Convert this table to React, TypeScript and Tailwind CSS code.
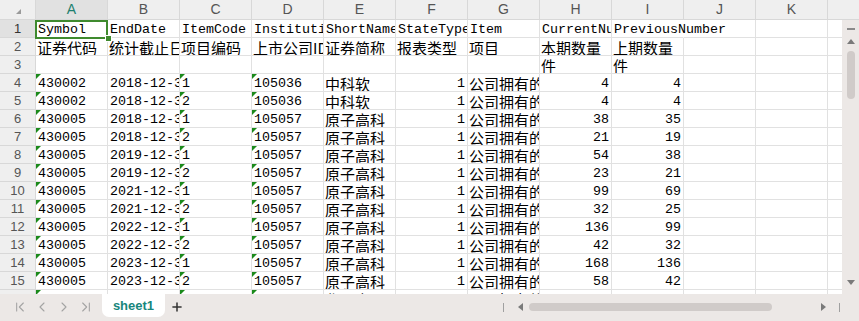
import React from "react";
import { ChevronFirst, ChevronLeft, ChevronRight, ChevronLast, Plus } from "lucide-react";

type CellDef = {
  t?: string;
  right?: boolean;
  cjk?: boolean;
  tri?: boolean;
  overflow?: boolean;
};

const COLS = ["A", "B", "C", "D", "E", "F", "G", "H", "I", "J", "K", "L"];

const data: string[][] = [
  ["430002", "2018-12-31", "1", "105036", "中科软", "1", "公司拥有的专利数量", "4", "4"],
  ["430002", "2018-12-31", "2", "105036", "中科软", "1", "公司拥有的专利数量", "4", "4"],
  ["430005", "2018-12-31", "1", "105057", "原子高科", "1", "公司拥有的专利数量", "38", "35"],
  ["430005", "2018-12-31", "2", "105057", "原子高科", "1", "公司拥有的专利数量", "21", "19"],
  ["430005", "2019-12-31", "1", "105057", "原子高科", "1", "公司拥有的专利数量", "54", "38"],
  ["430005", "2019-12-31", "2", "105057", "原子高科", "1", "公司拥有的专利数量", "23", "21"],
  ["430005", "2021-12-31", "1", "105057", "原子高科", "1", "公司拥有的专利数量", "99", "69"],
  ["430005", "2021-12-31", "2", "105057", "原子高科", "1", "公司拥有的专利数量", "32", "25"],
  ["430005", "2022-12-31", "1", "105057", "原子高科", "1", "公司拥有的专利数量", "136", "99"],
  ["430005", "2022-12-31", "2", "105057", "原子高科", "1", "公司拥有的专利数量", "42", "32"],
  ["430005", "2023-12-31", "1", "105057", "原子高科", "1", "公司拥有的专利数量", "168", "136"],
  ["430005", "2023-12-31", "2", "105057", "原子高科", "1", "公司拥有的专利数量", "58", "42"],
  ["430009", "2018-12-31", "1", "105063", "华环电子", "1", "公司拥有的专利数量", "12", "10"],
];

function toRow(r: string[]): CellDef[] {
  return [
    { t: r[0], tri: true },
    { t: r[1] },
    { t: r[2], tri: true },
    { t: r[3], tri: true },
    { t: r[4], cjk: true },
    { t: r[5], right: true },
    { t: r[6], cjk: true },
    { t: r[7], right: true },
    { t: r[8], right: true },
    {},
    {},
    {},
  ];
}

const rows: CellDef[][] = [
  [
    { t: "Symbol" },
    { t: "EndDate" },
    { t: "ItemCode" },
    { t: "InstitutionID" },
    { t: "ShortName" },
    { t: "StateTypeCode" },
    { t: "Item" },
    { t: "CurrentNumber" },
    { t: "PreviousNumber", overflow: true },
    {},
    {},
    {},
  ],
  [
    { t: "证券代码", cjk: true },
    { t: "统计截止日期", cjk: true },
    { t: "项目编码", cjk: true },
    { t: "上市公司ID", cjk: true },
    { t: "证券简称", cjk: true },
    { t: "报表类型", cjk: true },
    { t: "项目", cjk: true },
    { t: "本期数量", cjk: true },
    { t: "上期数量", cjk: true },
    {},
    {},
    {},
  ],
  [{}, {}, {}, {}, {}, {}, {}, { t: "件", cjk: true }, { t: "件", cjk: true }, {}, {}, {}],
  ...data.map(toRow),
];

function Cell({ c }: { c: CellDef }) {
  const font = c.cjk
    ? "font-['Noto_Sans_CJK_SC',sans-serif] text-[15px] pl-[1px]"
    : "font-['Liberation_Mono',monospace] text-[13.33px] pl-[2px]";
  return (
    <div
      className={`relative shrink-0 w-[72px] h-[18px] border-b border-r border-[#e1e1e1] flex items-center pt-[2px] leading-none whitespace-nowrap text-black ${
        c.overflow ? "overflow-visible border-r-transparent z-10" : "overflow-hidden"
      } ${c.right ? "justify-end pr-[2px]" : ""} ${font}`}
    >
      {c.tri && (
        <span className="absolute top-0 left-0 w-0 h-0 border-t-[5px] border-r-[5px] border-t-[#1b8a1b] border-r-transparent" />
      )}
      {c.t}
    </div>
  );
}

function Tri({ dir }: { dir: "up" | "down" | "left" | "right" }) {
  const pts =
    dir === "up"
      ? "0,5 4,0 8,5"
      : dir === "down"
      ? "0,0 8,0 4,5"
      : dir === "left"
      ? "5,0 5,8 0,4"
      : "0,0 0,8 5,4";
  const w = dir === "up" || dir === "down" ? 8 : 5;
  const h = dir === "up" || dir === "down" ? 5 : 8;
  return (
    <svg width={w} height={h} viewBox={`0 0 ${w} ${h}`}>
      <polygon points={pts} fill="#7a7a7a" />
    </svg>
  );
}

export default function App() {
  return (
    <div className="w-[859px] h-[321px] overflow-hidden flex flex-col bg-white font-['Liberation_Sans',sans-serif]">
      {/* column header */}
      <div className="flex h-[20px] shrink-0 bg-[#efefef] overflow-hidden">
        <div className="relative shrink-0 w-[36px] h-[20px] border-r border-b border-[#d8d8d8]">
          <svg className="absolute left-[16px] top-[9px]" width="5" height="5" viewBox="0 0 5 5">
            <polygon points="5,0 5,5 0,5" fill="#9a9a9a" />
          </svg>
        </div>
        {COLS.map((c, i) => (
          <div
            key={c}
            className={`shrink-0 w-[72px] h-[20px] border-r border-b border-[#d8d8d8] flex items-center justify-center text-[14px] ${
              i === 0 ? "bg-[#e1e1e1] text-[#1d7f6e]" : "text-[#555]"
            }`}
          >
            {c}
          </div>
        ))}
      </div>

      {/* body */}
      <div className="flex h-[274px] shrink-0">
        <div className="relative w-[842px] overflow-hidden">
          {rows.map((r, ri) => (
            <div key={ri} className="flex">
              <div
                className={`shrink-0 w-[36px] h-[18px] border-r border-b border-[#d8d8d8] flex items-center justify-center text-[13px] ${
                  ri === 0 ? "bg-[#e1e1e1] text-[#333]" : "bg-[#efefef] text-[#555]"
                }`}
              >
                {ri + 1}
              </div>
              {r.map((c, ci) => (
                <Cell key={ci} c={c} />
              ))}
            </div>
          ))}
          {/* selection box on A1 */}
          <div className="absolute left-[35px] top-0 w-[73px] h-[19px] border-[2.5px] border-[#3f8a2e] pointer-events-none z-20" />
          <div className="absolute left-[105px] top-[15px] w-[5px] h-[5px] bg-[#3f8a2e] border border-white box-content z-20" />
        </div>
        {/* vertical scrollbar */}
        <div className="w-[17px] shrink-0 bg-[#ece8e6] flex flex-col items-center">
          <div className="mt-[8px] w-[8px] h-[1.5px] bg-[#8a8a8a]" />
          <div className="mt-[9px]">
            <Tri dir="up" />
          </div>
          <div className="mt-[7px] w-[8px] h-[48px] rounded-full bg-[#d0cbc9]" />
          <div className="mt-auto mb-[9px]">
            <Tri dir="down" />
          </div>
        </div>
      </div>

      {/* tab bar */}
      <div className="flex h-[27px] shrink-0 bg-[#ece8e6] items-start">
        <div className="flex items-center gap-[6px] ml-[12px] h-[26px] text-[#a3a3a3]">
          <ChevronFirst size={16} strokeWidth={1.6} />
          <ChevronLeft size={16} strokeWidth={1.6} />
          <ChevronRight size={16} strokeWidth={1.6} />
          <ChevronLast size={16} strokeWidth={1.6} />
        </div>
        <div className="ml-[8px] w-[63px] h-[23px] bg-white rounded-b-[7px] flex items-center justify-center text-[13px] font-bold text-[#17867c]">
          sheet1
        </div>
        <div className="ml-[5px] h-[26px] flex items-center text-[#333]">
          <Plus size={14} strokeWidth={2.6} />
        </div>
        <div className="ml-auto w-[360px] h-[26px] flex items-center">
          <div className="ml-[4px] w-[1px] h-[9px] bg-[#a0a0a0]" />
          <div className="ml-[14px]">
            <Tri dir="left" />
          </div>
          <div className="ml-[6px] w-[243px] h-[8px] rounded-full bg-[#d0cbc9]" />
          <div className="ml-[49px]">
            <Tri dir="right" />
          </div>
          <div className="ml-[13px] w-[1px] h-[9px] bg-[#a0a0a0]" />
        </div>
      </div>
    </div>
  );
}
